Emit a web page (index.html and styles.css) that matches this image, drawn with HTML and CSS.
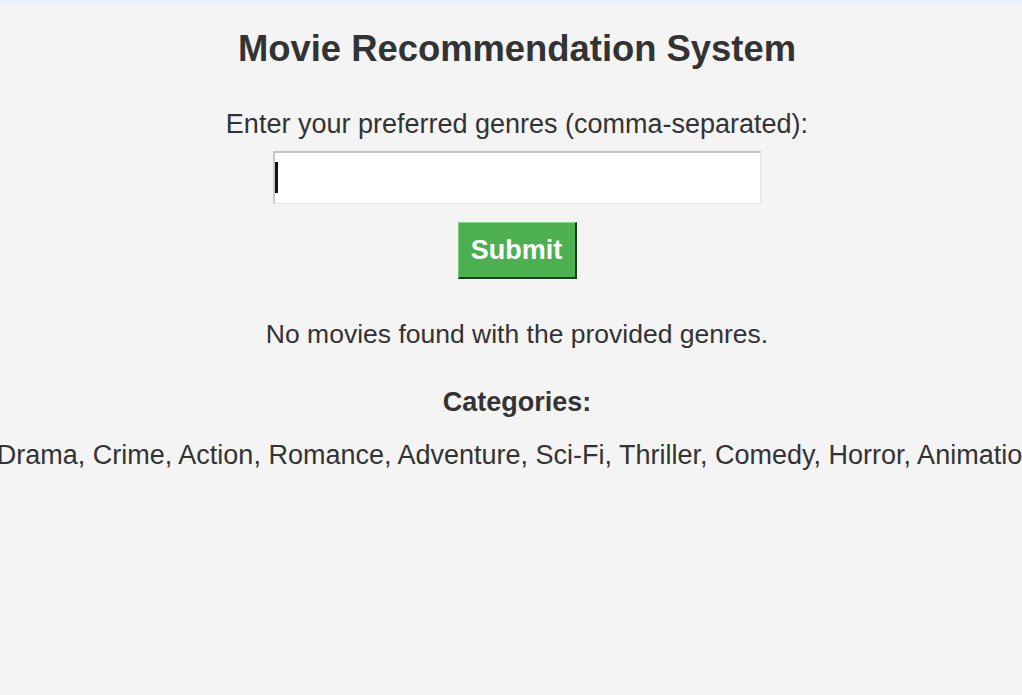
FILE: index.html
```html
<!DOCTYPE html>
<html lang="en">
<head>
<meta charset="utf-8">
<title>Movie Recommendation System</title>
<link rel="stylesheet" href="styles.css">
</head>
<body>
<div class="strip"></div>
<main class="page">
  <h1 class="title">Movie Recommendation System</h1>
  <label class="label" for="genres">Enter your preferred genres (comma-separated):</label>
  <div class="field">
    <input class="input" id="genres" type="text">
    <span class="caret"></span>
  </div>
  <button class="submit" type="button">Submit</button>
  <p class="message">No movies found with the provided genres.</p>
  <h3 class="cat-title">Categories:</h3>
  <p class="cat-list">Drama, Crime, Action, Romance, Adventure, Sci-Fi, Thriller, Comedy, Horror, Animation</p>
</main>
</body>
</html>
```
FILE: styles.css
```css
html, body {
  margin: 0;
  padding: 0;
  background: #f4f4f4;
  overflow: hidden;
}
body {
  font-family: "Liberation Sans", Arial, sans-serif;
  color: #333;
}
.strip {
  height: 5px;
  background: #edf2f9;
}
.page {
  display: flex;
  flex-direction: column;
  align-items: center;
  padding: 23px 0 0 12px;
}
.title {
  margin: 0;
  font-size: 36.4px;
  line-height: 42px;
  font-weight: bold;
  color: #333;
}
.label {
  margin-top: 39px;
  font-size: 27px;
  line-height: 31px;
}
.field {
  position: relative;
  margin-top: 11px;
}
.input {
  display: block;
  box-sizing: border-box;
  width: 488px;
  height: 53px;
  margin: 0;
  padding: 0 8px;
  background: #fff;
  border-style: solid;
  border-width: 2px 1px 1px 2px;
  border-color: #c3c3c3 #e6e6e6 #e6e6e6 #c8c8c8;
  outline: none;
  font-family: inherit;
  font-size: 27px;
}
.caret {
  position: absolute;
  left: 2px;
  top: 11px;
  width: 3px;
  height: 31px;
  background: #111;
}
.submit {
  margin-top: 18px;
  box-sizing: border-box;
  width: 119px;
  height: 57px;
  padding: 0;
  background: #4caf50;
  color: #fff;
  font-family: inherit;
  font-size: 27px;
  font-weight: bold;
  border-style: solid;
  border-width: 1px 2px 2px 1px;
  border-color: #8ed690 #1d3b1e #1d3b1e #7ccc7f;
}
.message {
  margin: 40px 0 0;
  font-size: 26.5px;
  line-height: 31px;
}
.cat-title {
  margin: 37px 0 0;
  font-size: 27px;
  line-height: 31px;
  font-weight: bold;
}
.cat-list {
  margin: 22px 0 0;
  font-size: 27px;
  line-height: 31px;
  white-space: nowrap;
}
```
